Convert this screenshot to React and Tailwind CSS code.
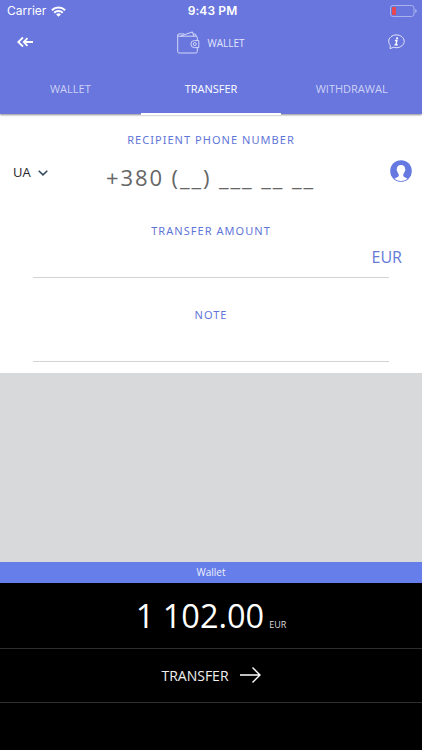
import React from "react";

const TABS = ["WALLET", "TRANSFER", "WITHDRAWAL"];

function WifiIcon() {
  return (
    <svg width="15" height="11" viewBox="0 0 15 11" fill="none" stroke="#fff" strokeWidth="2.1">
      <path d="M0.9 4.2a9.4 9.4 0 0 1 13.2 0" />
      <path d="M3.2 6.7a6.1 6.1 0 0 1 8.6 0" />
      <path d="M7.5 10.8 5.1 8.5a3.3 3.3 0 0 1 4.8 0z" fill="#fff" stroke="none" />
    </svg>
  );
}

function BatteryIcon() {
  return (
    <svg width="27" height="12" viewBox="0 0 27 12">
      <rect x="0.5" y="0.5" width="23.5" height="11" rx="2.5" fill="none" stroke="#aab2ee" />
      <rect x="2" y="2" width="4" height="8" rx="1" fill="#e8474f" />
      <path d="M25.2 4v4c1-.4 1.5-1.1 1.5-2s-.5-1.6-1.5-2z" fill="#aab2ee" />
    </svg>
  );
}

function BackIcon() {
  return (
    <svg className="-mt-[2px]" width="17" height="12" viewBox="0 0 17 12" fill="none" stroke="#fff" strokeWidth="1.8">
      <path d="M6 1.5 1.2 6 6 10.5" />
      <path d="M10.5 2.2 6.8 6l3.7 3.8M7 6h9" />
    </svg>
  );
}

function WalletIcon() {
  return (
    <svg className="-mt-[2px]" width="23" height="23" viewBox="0 0 23 23" fill="none" stroke="#dfe2fa" strokeWidth="0.9">
      <path d="M20.3 9.5V6.6a1.4 1.4 0 0 0-1.4-1.4H2C.9 5.2.7 4.6.7 4s.5-1.1 1.3-1.1h5.2M.7 4v16.5A1.5 1.5 0 0 0 2.2 22h16.6a1.5 1.5 0 0 0 1.5-1.5v-4" />
      <path d="M3.4 5.2 15.4.9l1.5 4.3M16.2 3h1.6c.7 0 1.1.5 1.1 1.2v1" />
      <path d="M21.8 9.6h-4.4a3.5 3.5 0 0 0 0 7h4.4z" />
      <circle cx="17.8" cy="13.1" r="1.5" />
    </svg>
  );
}

function InfoIcon() {
  return (
    <svg className="-mt-[2px]" width="17" height="16" viewBox="0 0 17 16" fill="none">
      <path
        d="M2.1 14.7 2.3 11.2C1.3 10.1.7 8.8.7 7.3.7 3.8 4.1.9 8.4.9s7.8 2.9 7.8 6.4-3.5 6.4-7.8 6.4c-1 0-1.9-.1-2.8-.5z"
        stroke="#e6e8fb"
        strokeWidth="1"
      />
      <circle cx="9.1" cy="4.3" r="1.1" fill="#fff" />
      <path d="M6.9 6.5h2l-.9 4.2h1.7M6.6 10.7h1.6" stroke="#fff" strokeWidth="1.4" />
    </svg>
  );
}

function ContactIcon() {
  return (
    <svg width="22" height="22" viewBox="0 0 22 22">
      <circle cx="11" cy="11" r="10.8" fill="#6579e1" />
      <path
        d="M11 4.9c-2.7 0-4.2 1.6-4.1 4-.5.2-.4 1.7.3 2.1.2 1.4.8 2.3 1.5 3v1.9c-.5 1.4-3 1.7-4.2 2.8a10 10 0 0 0 13 0c-1.2-1.1-3.7-1.4-4.2-2.8V14c.7-.7 1.3-1.6 1.5-3 .7-.4.8-1.9.3-2.1.1-2.4-1.4-4-4.1-4z"
        fill="#fff"
      />
    </svg>
  );
}

function FieldLabel({ children }) {
  return (
    <div className="text-center font-['Noto_Sans',sans-serif] text-[11px] leading-4 font-[450] tracking-[1.04px] text-[#5f76d8]">
      {children}
    </div>
  );
}

export default function App() {
  return (
    <div className="flex h-[750px] w-[422px] flex-col overflow-hidden bg-white font-['Open_Sans','Noto_Sans',sans-serif]">
      {/* Header */}
      <header className="relative z-10 h-[114px] shrink-0 bg-[#6876de] text-white shadow-[0_1px_2px_rgba(0,0,0,0.45)]">
        <div className="grid h-[22px] grid-cols-3 items-center pr-[5px] pl-[7px] font-['Inter',sans-serif] text-[12px] leading-[22px]">
          <div className="flex items-center gap-[5px]">
            <span>Carrier</span>
            <WifiIcon />
          </div>
          <span className="pl-[1px] text-center font-semibold tracking-[0.1px]">9:43 PM</span>
          <div className="flex justify-end">
            <BatteryIcon />
          </div>
        </div>

        <div className="grid h-[42px] grid-cols-3 items-center pr-[17px] pl-[17px]">
          <BackIcon />
          <div className="flex items-center justify-center gap-[7px]">
            <WalletIcon />
            <span className="text-[10px] leading-4 text-[#e3e6fb]">WALLET</span>
          </div>
          <div className="flex justify-end">
            <InfoIcon />
          </div>
        </div>

        <nav className="grid h-[51px] grid-cols-3">
          {TABS.map((tab) => (
            <button
              key={tab}
              className={
                tab === "TRANSFER"
                  ? "border-b-2 border-white pt-[2px] text-[11px] text-white"
                  : "border-b-2 border-transparent pt-[2px] text-[11px] text-[#cdd2f6]"
              }
            >
              {tab}
            </button>
          ))}
        </nav>
      </header>

      {/* Form */}
      <main className="flex h-[259px] shrink-0 flex-col pt-[18px]">
        <FieldLabel>RECIPIENT PHONE NUMBER</FieldLabel>
        <div className="flex h-[75px] items-start justify-between pr-[10px] pl-[13px]">
          <div className="flex w-[93px] items-center gap-[7px] pt-[14px] text-[13px] leading-5 text-[#26262b]">
            UA
            <svg className="mt-[2px]" width="10" height="6" viewBox="0 0 10 6" fill="none" stroke="#34495e" strokeWidth="1.5">
              <path d="M.7.7 5 4.9 9.3.7" />
            </svg>
          </div>
          <div className="flex-1 pt-[14px] text-[22px] leading-[30px] tracking-[1.9px] whitespace-pre text-[#666]">
            +380 (__) ___ __ __
          </div>
          <div className="pt-[12px]">
            <ContactIcon />
          </div>
        </div>

        <FieldLabel>TRANSFER AMOUNT</FieldLabel>
        <div className="mx-[33px] flex h-[39px] justify-end border-b border-[#d2d3d5]">
          <span className="-mr-[13px] pt-[7px] text-[16px] leading-[22px] text-[#6579d8]">EUR</span>
        </div>

        <div className="pt-[29px]">
          <FieldLabel>NOTE</FieldLabel>
        </div>
        <div className="mx-[33px] h-[39px] border-b border-[#d2d3d5]" />
      </main>

      <div className="flex-1 bg-[#d8d9db]" />

      {/* Balance */}
      <section className="h-[188px] shrink-0 bg-black text-white">
        <div className="h-[21px] bg-[#667eea] text-center text-[10px] leading-[20px] text-[#eef0fd]">Wallet</div>
        <div className="flex h-[66px] items-baseline justify-center gap-[5px] border-b border-[#2e2e2e]">
          <span className="text-[32.5px] leading-[65px] font-[370]">1 102.00</span>
          <span className="text-[9px] text-[#ddd]">EUR</span>
        </div>
        <button className="flex h-[54px] w-full items-center justify-center gap-[11px] border-b border-[#2e2e2e] text-[14px] text-[#f0f0f0]">
          <span className="-mt-px">TRANSFER</span>
          <svg className="-mt-[2px]" width="21" height="16" viewBox="0 0 21 16" fill="none" stroke="#fff" strokeWidth="1.4">
            <path d="M0 8h20M12.5.6 20 8l-7.5 7.4" />
          </svg>
        </button>
      </section>
    </div>
  );
}
